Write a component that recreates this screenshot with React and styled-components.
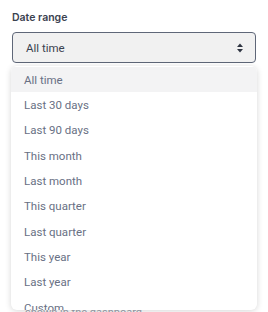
import { useState } from "react";
import styled, { createGlobalStyle } from "styled-components";

const Global = createGlobalStyle`
  body {
    margin: 0;
    background: #ffffff;
    font-family: Roboto, "Noto Sans", sans-serif;
  }
`;

const Page = styled.div`
  position: relative;
  width: 268px;
  height: 312px;
  overflow: hidden;
  padding: 10px 12px 0 12px;
  box-sizing: border-box;
`;

const Label = styled.div`
  font-family: Inter, Roboto, sans-serif;
  font-size: 10.5px;
  font-weight: 600;
  color: #3b4250;
  line-height: 15px;
  margin-bottom: 7px;
`;

const Field = styled.div`
  position: relative;
`;

const SelectBox = styled.div`
  display: flex;
  align-items: center;
  justify-content: space-between;
  height: 31px;
  box-sizing: border-box;
  border: 1.5px solid #5f6778;
  border-radius: 4px;
  background: #f1f1f1;
  padding: 0 11px 0 13px;
  font-size: 11.5px;
  color: #3b4250;
`;

const Menu = styled.ul`
  position: absolute;
  top: 34px;
  left: -1px;
  width: 246px;
  height: 244px;
  margin: 0;
  padding: 1px 0 0 0;
  list-style: none;
  box-sizing: border-box;
  overflow: hidden;
  background: #ffffff;
  border-radius: 6px;
  box-shadow: 0 1px 6px rgba(0, 0, 0, 0.16);
`;

const Item = styled.li`
  display: flex;
  align-items: center;
  height: 25.33px;
  padding-left: 13px;
  font-size: 11.5px;
  color: #687084;
  background: ${(p) => (p.$active ? "#f3f3f4" : "transparent")};
`;

const Behind = styled.p`
  margin: 0;
  position: absolute;
  top: 306px;
  left: 25px;
  font-size: 11px;
  color: #9aa0ab;
`;

const options = [
  "All time",
  "Last 30 days",
  "Last 90 days",
  "This month",
  "Last month",
  "This quarter",
  "Last quarter",
  "This year",
  "Last year",
  "Custom",
];

const Chevrons = () => (
  <svg width="8" height="12" viewBox="0 0 8 12">
    <path d="M4 1.5 L7 5 H1 Z" fill="#2f3542" />
    <path d="M4 10.5 L7 7 H1 Z" fill="#2f3542" />
  </svg>
);

export default function App() {
  const [value] = useState("All time");

  return (
    <>
      <Global />
      <Page>
        <Behind>shown in the dashboard</Behind>
        <Label>Date range</Label>
        <Field>
          <SelectBox>
            <span>{value}</span>
            <Chevrons />
          </SelectBox>
          <Menu>
            {options.map((o) => (
              <Item key={o} $active={o === value}>
                {o}
              </Item>
            ))}
          </Menu>
        </Field>
      </Page>
    </>
  );
}
